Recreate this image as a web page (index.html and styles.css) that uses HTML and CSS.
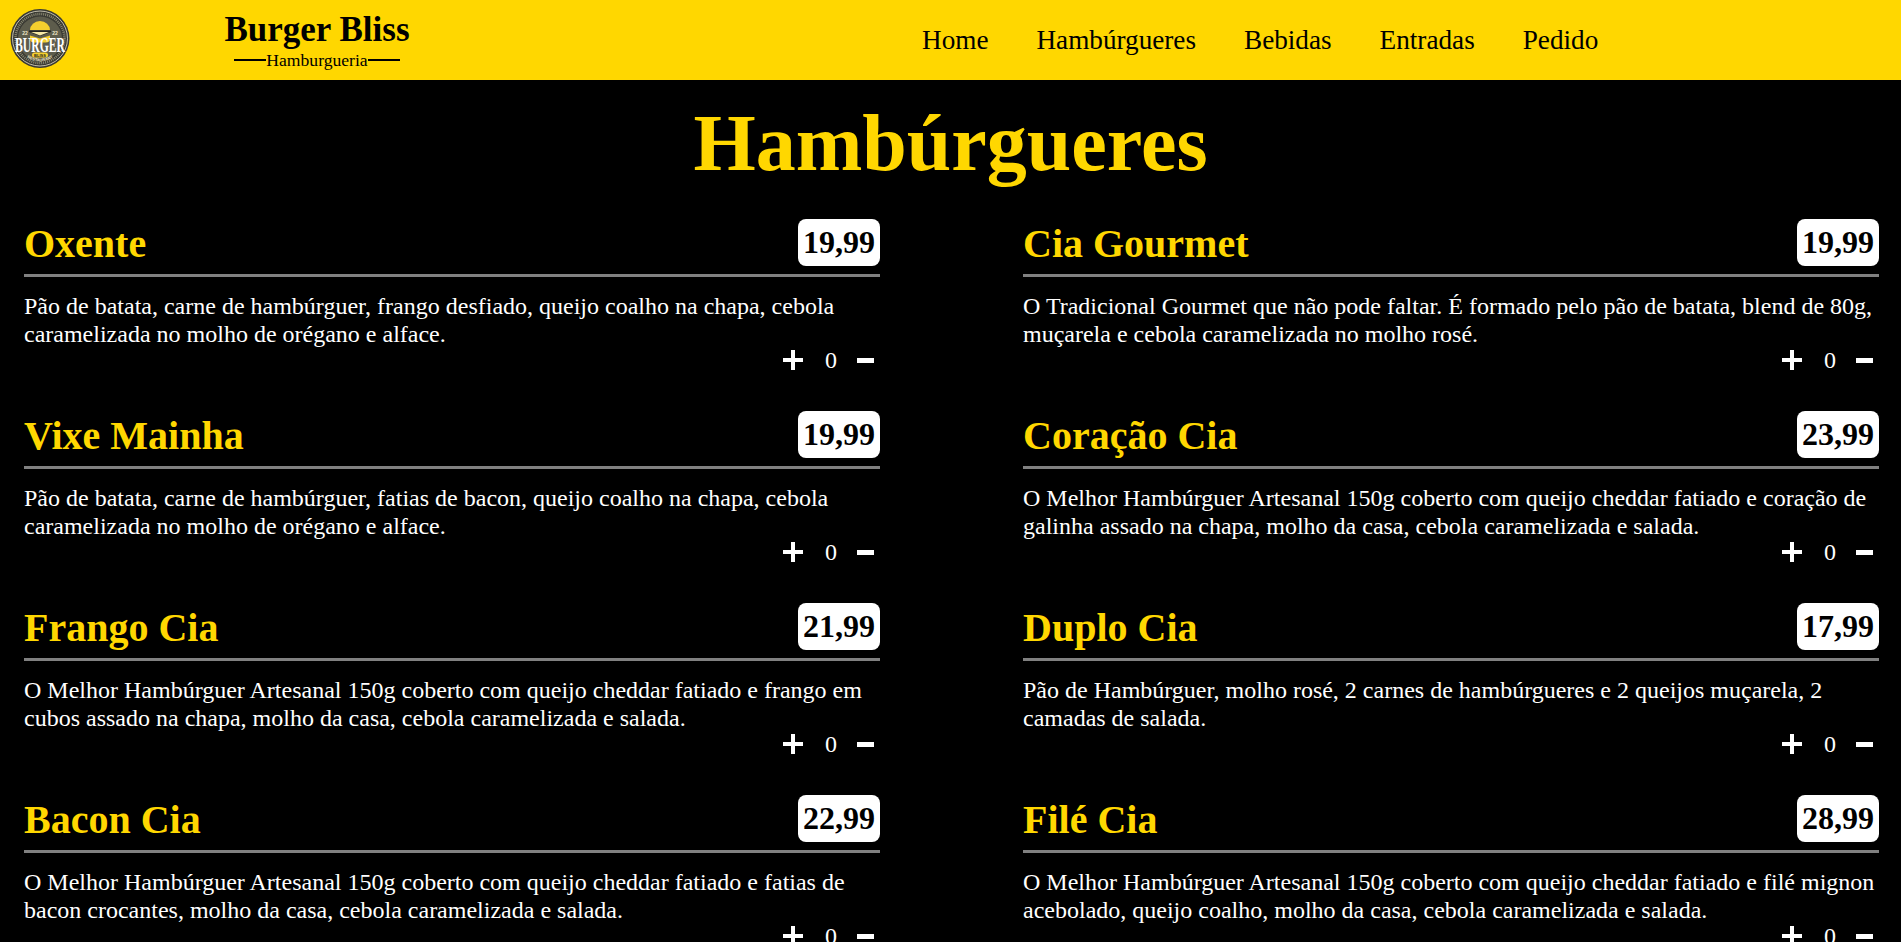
FILE: index.html
```html
<!DOCTYPE html>
<html lang="pt-BR">
<head>
    <meta charset="UTF-8">
    <meta name="viewport" content="width=device-width, initial-scale=1.0">
    <title>Burger Bliss</title>
    <link rel="stylesheet" href="styles.css">
</head>
<body>
    <svg class="defs" width="0" height="0" aria-hidden="true">
        <symbol id="mais" viewBox="0 0 20 20"><path d="M8 0h4v8h8v4h-8v8H8v-8H0V8h8z"/></symbol>
        <symbol id="menos" viewBox="0 0 17 5"><path d="M0 0h17v5H0z"/></symbol>
    </svg>

    <header class="topo">
        <svg class="logo" viewBox="0 0 60 64" width="60" height="64" aria-label="Burger Bliss">
            <defs>
                <path id="arco" d="M9 40a24 24 0 0 0 42 0"/>
            </defs>
            <circle cx="30" cy="29.500" r="29.500" fill="#3a3a33"/>
            <circle cx="30" cy="29.500" r="27.500" fill="none" stroke="#e4e0cc" stroke-width="0.800"/>
            <circle cx="30" cy="29.500" r="24.500" fill="none" stroke="#8a8872" stroke-width="2.500" stroke-dasharray="1 1"/>
            <circle cx="30" cy="29.500" r="22" fill="#5d5c4c"/>
            <path d="M20 21a10 9 0 0 1 20 0z" fill="#f5cf2e"/>
            <path d="M19 21.500h22v1.500l-11 4-11-4z" fill="#24241f"/>
            <path d="M21 23h18l-9 3.500z" fill="#f7e9a6"/>
            <path d="M20 26.500l10 3 10-3v3a4 4 0 0 1-4 4H24a4 4 0 0 1-4-4z" fill="#f5cf2e"/>
            <text class="logo-num" x="15" y="26" text-anchor="middle">22</text>
            <text class="logo-num" x="45" y="26" text-anchor="middle">22</text>
            <text class="logo-marca" x="30" y="43" text-anchor="middle" textLength="50" lengthAdjust="spacingAndGlyphs">BURGER</text>
            <rect x="22" y="43.500" width="16" height="5" rx="2.500" fill="#f5cf2e"/>
            <text class="logo-bliss" x="30" y="47.500" text-anchor="middle">BLISS</text>
            <text class="logo-rest"><textPath href="#arco" startOffset="50%" text-anchor="middle">RESTAURANT</textPath></text>
        </svg>
        <div class="marca">
            <h1>Burger Bliss</h1>
            <p class="sub"><span class="traco"></span>Hamburgueria<span class="traco"></span></p>
        </div>
        <nav class="menu">
            <a href="#">Home</a>
            <a href="#">Hambúrgueres</a>
            <a href="#">Bebidas</a>
            <a href="#">Entradas</a>
            <a href="#">Pedido</a>
        </nav>
    </header>

    <main>
        <h2 class="titulo">Hambúrgueres</h2>
        <section class="grade">
            <article class="item">
                <div class="item-topo"><h3>Oxente</h3><span class="preco">19,99</span></div>
                <p>Pão de batata, carne de hambúrguer, frango desfiado, queijo coalho na chapa, cebola caramelizada no molho de orégano e alface.</p>
                <div class="qtd"><button><svg class="ico-mais"><use href="#mais"/></svg></button><span>0</span><button><svg class="ico-menos"><use href="#menos"/></svg></button></div>
            </article>
            <article class="item">
                <div class="item-topo"><h3>Cia Gourmet</h3><span class="preco">19,99</span></div>
                <p>O Tradicional Gourmet que não pode faltar. É formado pelo pão de batata, blend de 80g, muçarela e cebola caramelizada no molho rosé.</p>
                <div class="qtd"><button><svg class="ico-mais"><use href="#mais"/></svg></button><span>0</span><button><svg class="ico-menos"><use href="#menos"/></svg></button></div>
            </article>
            <article class="item">
                <div class="item-topo"><h3>Vixe Mainha</h3><span class="preco">19,99</span></div>
                <p>Pão de batata, carne de hambúrguer, fatias de bacon, queijo coalho na chapa, cebola caramelizada no molho de orégano e alface.</p>
                <div class="qtd"><button><svg class="ico-mais"><use href="#mais"/></svg></button><span>0</span><button><svg class="ico-menos"><use href="#menos"/></svg></button></div>
            </article>
            <article class="item">
                <div class="item-topo"><h3>Coração Cia</h3><span class="preco">23,99</span></div>
                <p>O Melhor Hambúrguer Artesanal 150g coberto com queijo cheddar fatiado e coração de galinha assado na chapa, molho da casa, cebola caramelizada e salada.</p>
                <div class="qtd"><button><svg class="ico-mais"><use href="#mais"/></svg></button><span>0</span><button><svg class="ico-menos"><use href="#menos"/></svg></button></div>
            </article>
            <article class="item">
                <div class="item-topo"><h3>Frango Cia</h3><span class="preco">21,99</span></div>
                <p>O Melhor Hambúrguer Artesanal 150g coberto com queijo cheddar fatiado e frango em cubos assado na chapa, molho da casa, cebola caramelizada e salada.</p>
                <div class="qtd"><button><svg class="ico-mais"><use href="#mais"/></svg></button><span>0</span><button><svg class="ico-menos"><use href="#menos"/></svg></button></div>
            </article>
            <article class="item">
                <div class="item-topo"><h3>Duplo Cia</h3><span class="preco">17,99</span></div>
                <p>Pão de Hambúrguer, molho rosé, 2 carnes de hambúrgueres e 2 queijos muçarela, 2 camadas de salada.</p>
                <div class="qtd"><button><svg class="ico-mais"><use href="#mais"/></svg></button><span>0</span><button><svg class="ico-menos"><use href="#menos"/></svg></button></div>
            </article>
            <article class="item">
                <div class="item-topo"><h3>Bacon Cia</h3><span class="preco">22,99</span></div>
                <p>O Melhor Hambúrguer Artesanal 150g coberto com queijo cheddar fatiado e fatias de bacon crocantes, molho da casa, cebola caramelizada e salada.</p>
                <div class="qtd"><button><svg class="ico-mais"><use href="#mais"/></svg></button><span>0</span><button><svg class="ico-menos"><use href="#menos"/></svg></button></div>
            </article>
            <article class="item">
                <div class="item-topo"><h3>Filé Cia</h3><span class="preco">28,99</span></div>
                <p>O Melhor Hambúrguer Artesanal 150g coberto com queijo cheddar fatiado e filé mignon acebolado, queijo coalho, molho da casa, cebola caramelizada e salada.</p>
                <div class="qtd"><button><svg class="ico-mais"><use href="#mais"/></svg></button><span>0</span><button><svg class="ico-menos"><use href="#menos"/></svg></button></div>
            </article>
        </section>
    </main>
</body>
</html>
```

FILE: styles.css
```css
* {
    box-sizing: border-box;
}
body {
    margin: 0;
    background-color: #000;
    color: #fff;
    font-family: "Liberation Serif", serif;
}
.defs {
    position: absolute;
}
.topo {
    display: flex;
    align-items: center;
    height: 80px;
    background-color: #ffd700;
    color: #000;
}
.logo {
    flex: none;
    margin-left: 10px;
    margin-top: 2px;
}
.logo-marca {
    font: bold 20px "Liberation Serif", serif;
    fill: #fff;
}
.logo-bliss {
    font: bold 4px "Liberation Sans", sans-serif;
    fill: #222;
}
.logo-rest {
    font: bold 4px "Liberation Sans", sans-serif;
    fill: #f0e8c8;
}
.logo-num {
    font: bold 5px "Liberation Sans", sans-serif;
    fill: #f0e8c8;
}
.marca {
    width: 250px;
    margin-left: 122px;
    text-align: center;
}
.marca h1 {
    margin: 0;
    font-size: 35px;
    line-height: 40px;
}
.sub {
    display: flex;
    align-items: center;
    justify-content: center;
    margin: 0;
    font-size: 17.600px;
    line-height: 20px;
}
.traco {
    width: 32px;
    height: 2px;
    background-color: #000;
}
.menu {
    display: flex;
    gap: 48px;
    margin-left: 480px;
}
.menu a {
    color: #000;
    font-size: 27.200px;
    text-decoration: none;
}
.titulo {
    margin: 17px 0 32px;
    color: #ffd700;
    font-size: 80px;
    line-height: 92px;
    text-align: center;
}
.grade {
    display: grid;
    grid-template-columns: 856px 856px;
    column-gap: 143px;
    padding: 0 24px;
}
.item {
    height: 192px;
}
.item-topo {
    display: flex;
    align-items: center;
    justify-content: space-between;
    height: 56px;
    padding-bottom: 8px;
    border-bottom: 3px solid #808080;
}
.item-topo h3 {
    margin: 0;
    color: #ffd700;
    font-size: 40px;
}
.preco {
    margin-bottom: 2px;
    padding: 0 5px;
    border-radius: 8px;
    background-color: #fff;
    color: #000;
    font-size: 32px;
    font-weight: bold;
    line-height: 47px;
}
.item p {
    margin: 15px 0 0;
    font-size: 24px;
    line-height: 28px;
}
.qtd {
    display: flex;
    align-items: center;
    justify-content: flex-end;
    height: 24px;
    padding-right: 6px;
    font-size: 24px;
}
.qtd span {
    width: 12px;
    margin: 0 20px 0 22px;
}
.qtd button {
    display: flex;
    padding: 0;
    border: none;
    background: none;
}
.qtd svg {
    fill: #fff;
}
.ico-mais {
    width: 20px;
    height: 20px;
}
.ico-menos {
    width: 17px;
    height: 5px;
}
```
